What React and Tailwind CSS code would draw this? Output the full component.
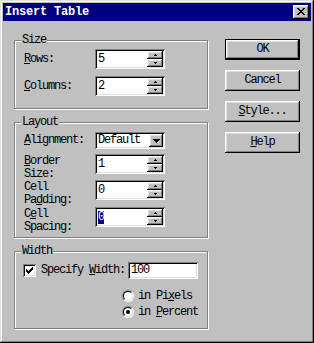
import React from "react";

const FAM = "[font-family:Liberation_Mono,monospace]";
const FONT = FAM + " text-[12px] leading-[13px] tracking-[-1.2px] text-black";
const RAISED = "shadow-[inset_-1px_-1px_0_#000,inset_1px_1px_0_#fff,inset_-2px_-2px_0_#808080,inset_2px_2px_0_#dfdfdf]";
const SUNKEN = "shadow-[inset_1px_1px_0_#808080,inset_-1px_-1px_0_#fff,inset_2px_2px_0_#000,inset_-2px_-2px_0_#dfdfdf]";

function Pix({ rows, color = "#000", className = "" }) {
  const w = rows[0].length;
  const h = rows.length;
  const rects = [];
  rows.forEach((r, y) => {
    for (let x = 0; x < r.length; x++) {
      if (r[x] === "#") rects.push(<rect key={x + "-" + y} x={x} y={y} width="1" height="1" fill={color} />);
    }
  });
  return (
    <svg width={w} height={h} viewBox={`0 0 ${w} ${h}`} shapeRendering="crispEdges" className={"block " + className}>
      {rects}
    </svg>
  );
}

const X_ICON = ["##....##", ".##..##.", "..####..", "...##...", "..####..", ".##..##.", "##....##"];
const UP = [".#.", "###"];
const DOWN = ["###", ".#."];
const COMBO = ["#######", ".#####.", "..###..", "...#..."];
const CHECK = ["......#", ".....##", "#...###", "##.###.", "#####..", ".###...", "..#...."];

function Group({ label, className = "", children }) {
  return (
    <div className={"relative border border-[#808080] shadow-[inset_1px_1px_0_#fff,1px_1px_0_#fff] " + className}>
      <span className={"absolute top-[-7px] left-[6px] px-[1px] bg-[#c0c0c0] " + FONT}>{label}</span>
      {children}
    </div>
  );
}

function SpinBtn({ rows }) {
  return (
    <div className={"w-[16px] h-[8px] bg-[#c0c0c0] flex items-center justify-center " + RAISED}>
      <Pix rows={rows} />
    </div>
  );
}

function SpinInput({ value, selected }) {
  return (
    <div className={"w-[70px] h-[20px] bg-white flex p-[2px] " + SUNKEN}>
      <div className={"flex-1 flex items-center pl-[1px] " + FONT}>
        {selected ? <span className="bg-[#000080] text-white">{value}</span> : value}
      </div>
      <div className="flex flex-col">
        <SpinBtn rows={UP} />
        <SpinBtn rows={DOWN} />
      </div>
    </div>
  );
}

function Btn({ children, def }) {
  return (
    <div
      className={
        "w-[75px] h-[21px] bg-[#c0c0c0] flex items-center justify-center " +
        (def ? "border border-black " : "") +
        RAISED +
        " " +
        FONT
      }
    >
      {children}
    </div>
  );
}

function Radio({ checked }) {
  return (
    <div className="w-[12px] h-[12px] rounded-full border border-t-[#808080] border-l-[#808080] border-r-white border-b-white">
      <div className="w-full h-full rounded-full border border-t-black border-l-black border-r-[#dfdfdf] border-b-[#dfdfdf] bg-white flex items-center justify-center">
        {checked && <div className="w-[4px] h-[4px] rounded-full bg-black" />}
      </div>
    </div>
  );
}

export default function App() {
  return (
    <div className="w-[314px] h-[343px] bg-[#c0c0c0] p-[3px] flex flex-col shadow-[inset_-1px_-1px_0_#000,inset_1px_1px_0_#dfdfdf,inset_-2px_-2px_0_#808080,inset_2px_2px_0_#fff]">
      {/* Title bar */}
      <div className="h-[18px] bg-[#000080] flex items-center justify-between pl-[2px] pr-[2px]">
        <span className={FAM + " text-[12px] font-bold tracking-[-0.2px] text-white leading-[13px]"}>
          Insert Table
        </span>
        <div className={"w-[16px] h-[14px] bg-[#c0c0c0] flex items-center justify-center pb-[1px] pr-[1px] " + RAISED}>
          <Pix rows={X_ICON} />
        </div>
      </div>

      <div className="flex items-start pl-[11px] pt-[18px]">
        {/* Left column */}
        <div className="w-[194px] mt-[1px] flex flex-col">
          <Group label="Size" className="pt-[8px] pb-[12px] pl-[9px]">
            <div className="flex items-center h-[20px]">
              <span className={"w-[71px] " + FONT}>
                <u>R</u>ows:
              </span>
              <SpinInput value="5" />
            </div>
            <div className="flex items-center h-[20px] mt-[7px]">
              <span className={"w-[71px] " + FONT}>
                <u>C</u>olumns:
              </span>
              <SpinInput value="2" />
            </div>
          </Group>

          <Group label="Layout" className="mt-[13px] pt-[9px] pb-[10px] pl-[9px]">
            <div className="flex items-center h-[17px]">
              <span className={"w-[71px] " + FONT}>
                <u>A</u>lignment:
              </span>
              <div className={"w-[70px] h-[17px] bg-white flex p-[2px] " + SUNKEN}>
                <div className={"flex-1 flex items-center pl-[1px] " + FONT}>Default</div>
                <div className={"w-[14px] h-full bg-[#c0c0c0] flex items-center justify-center " + RAISED}>
                  <Pix rows={COMBO} />
                </div>
              </div>
            </div>
            <div className="flex items-start h-[20px] mt-[5px]">
              <span className={"w-[71px] pt-[1px] " + FONT}>
                <u>B</u>order
                <br />
                Size:
              </span>
              <SpinInput value="1" />
            </div>
            <div className="flex items-start h-[20px] mt-[6px]">
              <span className={"w-[71px] pt-[1px] " + FONT}>
                Cell
                <br />
                Pa<u>d</u>ding:
              </span>
              <SpinInput value="0" />
            </div>
            <div className="flex items-start h-[20px] mt-[7px]">
              <span className={"w-[71px] pt-[1px] " + FONT}>
                C<u>e</u>ll
                <br />
                Spacing:
              </span>
              <SpinInput value="0" selected />
            </div>
          </Group>

          <Group label="Width" className="mt-[13px] pt-[10px] pb-[8px]">
            <div className="flex items-center h-[17px] pl-[8px]">
              <div className={"w-[13px] h-[13px] bg-white flex items-center justify-center " + SUNKEN}>
                <Pix rows={CHECK} />
              </div>
              <span className={"ml-[5px] w-[87px] " + FONT}>
                Specify <u>W</u>idth:
              </span>
              <div className={"w-[70px] h-[17px] bg-white flex items-center px-[3px] " + SUNKEN + " " + FONT}>100</div>
            </div>
            <div className="flex items-center h-[16px] mt-[9px] pl-[107px]">
              <Radio />
              <span className={"ml-[4px] " + FONT}>
                in Pi<u>x</u>els
              </span>
            </div>
            <div className="flex items-center h-[16px] pl-[107px]">
              <Radio checked />
              <span className={"ml-[4px] " + FONT}>
                in <u>P</u>ercent
              </span>
            </div>
          </Group>
        </div>

        {/* Right column: buttons */}
        <div className="ml-[17px] flex flex-col gap-[10px]">
          <Btn def>OK</Btn>
          <Btn>Cancel</Btn>
          <Btn>
            <span>
              <u>S</u>tyle...
            </span>
          </Btn>
          <Btn>
            <span>
              <u>H</u>elp
            </span>
          </Btn>
        </div>
      </div>
    </div>
  );
}
